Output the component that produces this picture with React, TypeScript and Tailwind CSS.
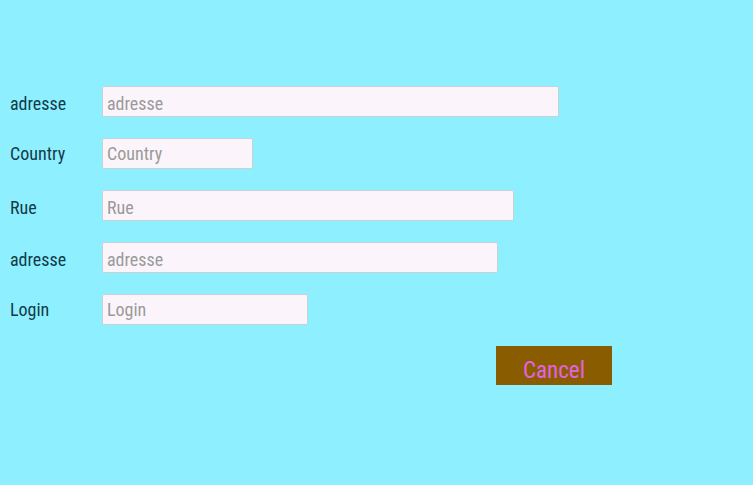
import React from "react";

const rows = [
  { label: "adresse", w: "w-[457px]", pt: "pt-[4px]" },
  { label: "Country", w: "w-[151px]", pt: "pt-[0px]" },
  { label: "Rue", w: "w-[412px]", pt: "pt-[4px]" },
  { label: "adresse", w: "w-[396px]", pt: "pt-[4px]" },
  { label: "Login", w: "w-[206px]", pt: "pt-[0px]" },
];

export default function App() {
  return (
    <div className="w-[753px] h-[485px] bg-[#8ef0fe] pt-[86px] pl-[10px] font-['Roboto',sans-serif] [font-stretch:condensed]">
      <div className="flex flex-col gap-[21px]">
        {rows.map((r, i) => (
          <div key={i} className="flex items-center h-[31px]">
            <div className={`w-[92px] text-[18px] text-[#123a4a] ${r.pt}`}>{r.label}</div>
            <input
              placeholder={r.label}
              className={`${r.w} h-[31px] bg-[#fbf5fb] border border-[#c7d2d6] rounded-[2px] px-[4px] ${r.pt} text-[18px] placeholder:text-[#9a9a9a] outline-none`}
            />
          </div>
        ))}
      </div>
      <div className="flex mt-[21px] pl-[486px]">
        <button className="w-[116px] h-[39px] bg-[#8a5c00] text-[#e263e3] text-[23px] pt-[8px]">
          Cancel
        </button>
      </div>
    </div>
  );
}
